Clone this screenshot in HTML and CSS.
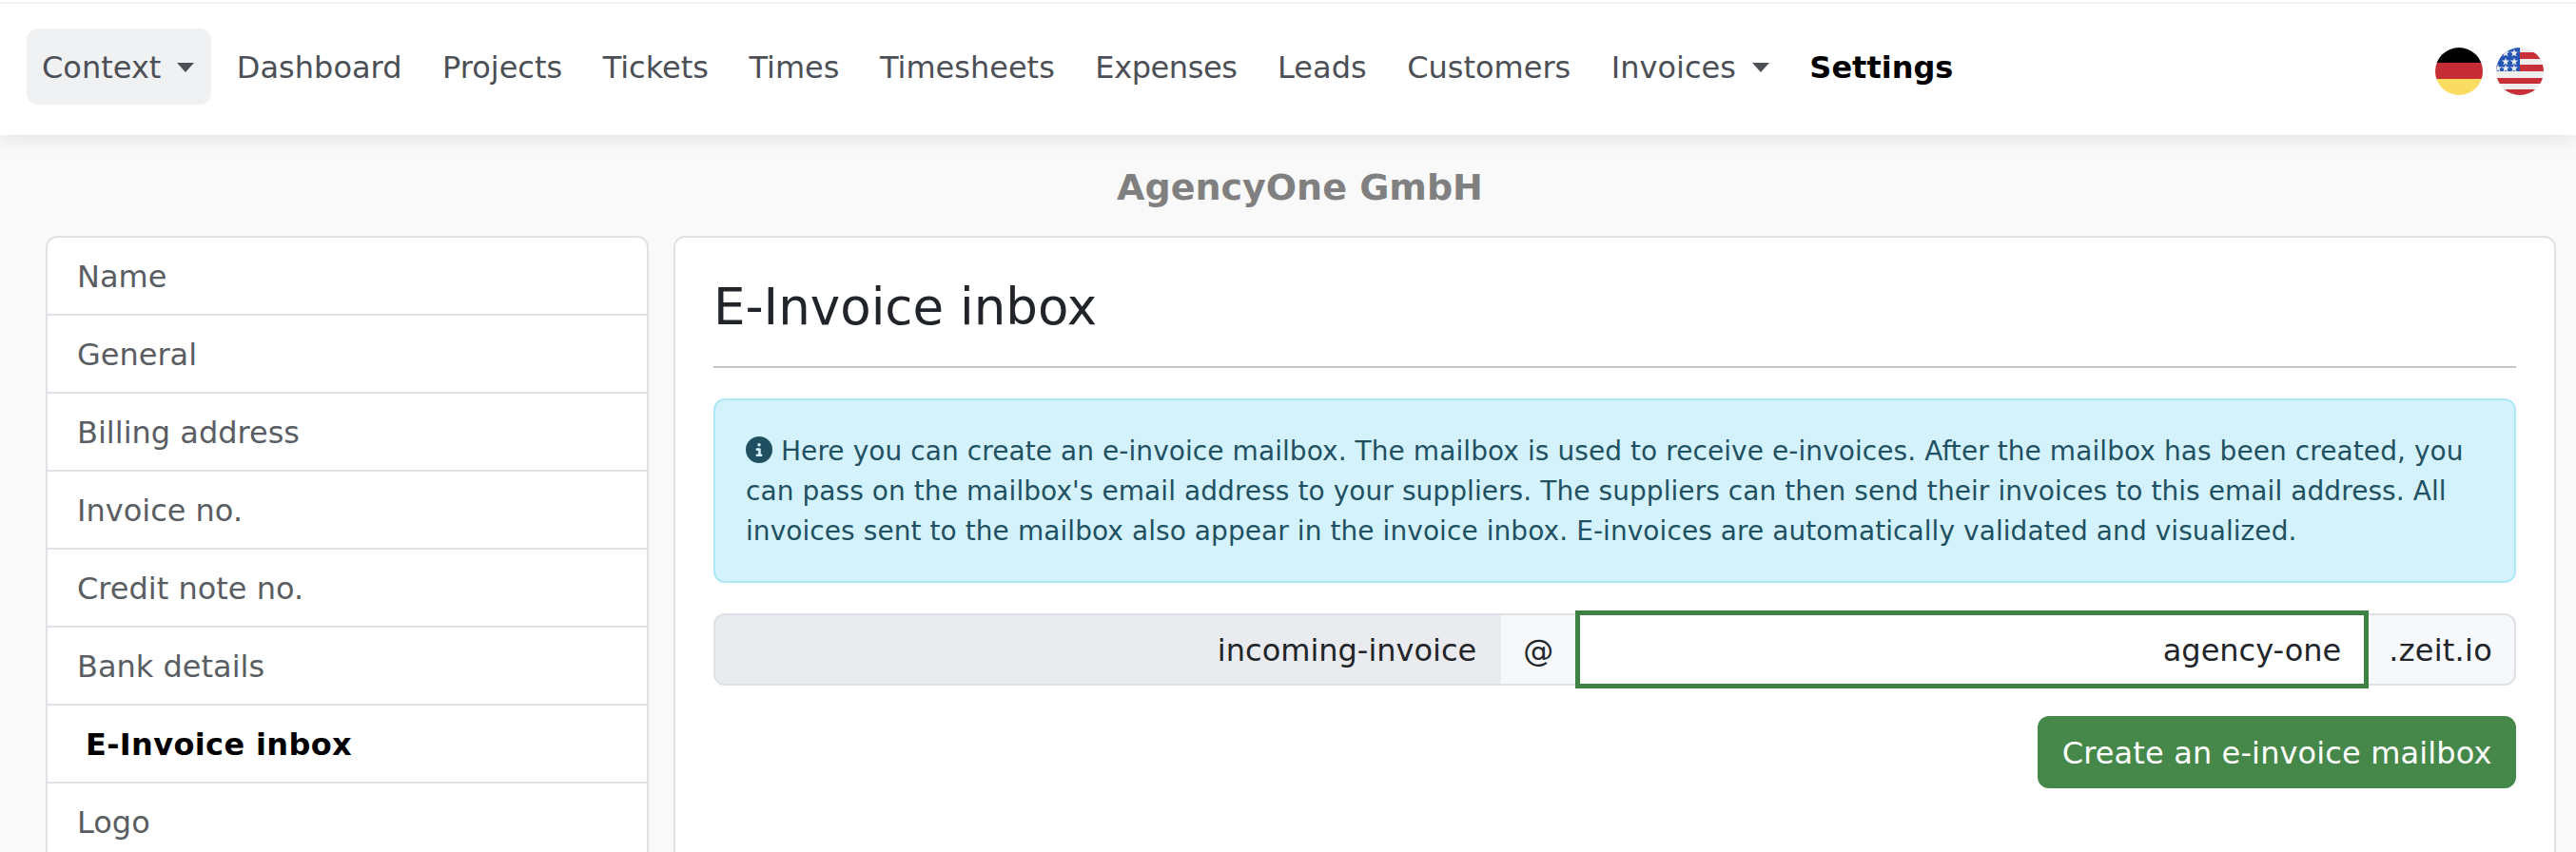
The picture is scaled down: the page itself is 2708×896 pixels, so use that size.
FILE: index.html
```html
<!DOCTYPE html>
<html lang="en">
<head>
    <meta charset="UTF-8">
    <title>E-Invoice inbox</title>
    <link rel="stylesheet" href="styles.css">
</head>
<body>
    <nav class="navbar">
        <ul class="nav-links">
            <li><a href="#" class="nav-link active caret">Context</a></li>
            <li><a href="#" class="nav-link">Dashboard</a></li>
            <li><a href="#" class="nav-link">Projects</a></li>
            <li><a href="#" class="nav-link">Tickets</a></li>
            <li><a href="#" class="nav-link">Times</a></li>
            <li><a href="#" class="nav-link">Timesheets</a></li>
            <li><a href="#" class="nav-link tight">Expenses</a></li>
            <li><a href="#" class="nav-link">Leads</a></li>
            <li><a href="#" class="nav-link">Customers</a></li>
            <li><a href="#" class="nav-link caret">Invoices</a></li>
            <li><a href="#" class="nav-link current">Settings</a></li>
        </ul>
        <div class="flags">
            <svg class="flag" viewBox="0 0 50 50">
                <clipPath id="clip-de"><circle cx="25" cy="25" r="25"/></clipPath>
                <g clip-path="url(#clip-de)">
                    <rect width="50" height="16" fill="#000"/>
                    <rect y="16" width="50" height="17" fill="#c62c33"/>
                    <rect y="33" width="50" height="17" fill="#fbdc63"/>
                </g>
            </svg>
            <svg class="flag" viewBox="0 0 50 50">
                <clipPath id="clip-us"><circle cx="25" cy="25" r="25"/></clipPath>
                <g clip-path="url(#clip-us)">
                    <rect width="50" height="50" fill="#eee"/>
                    <rect y="5" width="50" height="7" fill="#c92f38"/>
                    <rect y="18" width="50" height="7" fill="#c92f38"/>
                    <rect y="32" width="50" height="6" fill="#c92f38"/>
                    <rect y="44" width="50" height="6" fill="#c92f38"/>
                    <rect width="25" height="25" fill="#2455b5"/>
                    <g fill="#eee">
                        <polygon points="19,1.5 20,4.6 23.2,4.6 20.6,6.5 21.6,9.6 19,7.7 16.4,9.6 17.4,6.5 14.8,4.6 18,4.6"/>
                        <polygon points="19,10.5 20,13.6 23.2,13.6 20.6,15.5 21.6,18.6 19,16.7 16.4,18.6 17.4,15.5 14.8,13.6 18,13.6"/>
                        <polygon points="19,17.5 20,20.6 23.2,20.6 20.6,22.5 21.6,25.6 19,23.7 16.4,25.6 17.4,22.5 14.8,20.6 18,20.6"/>
                        <polygon points="10,1.5 11,4.6 14.2,4.6 11.6,6.5 12.6,9.6 10,7.7 7.4,9.6 8.4,6.5 5.8,4.6 9,4.6"/>
                        <polygon points="10,10.5 11,13.6 14.2,13.6 11.6,15.5 12.6,18.6 10,16.7 7.4,18.6 8.4,15.5 5.8,13.6 9,13.6"/>
                        <polygon points="10,17.5 11,20.6 14.2,20.6 11.6,22.5 12.6,25.6 10,23.7 7.4,25.6 8.4,22.5 5.8,20.6 9,20.6"/>
                        <polygon points="2,17.5 3,20.6 6.2,20.6 3.6,22.5 4.6,25.6 2,23.7 -0.6,25.6 0.4,22.5 -2.2,20.6 1,20.6"/>
                    </g>
                </g>
            </svg>
        </div>
    </nav>

    <h1 class="company">AgencyOne GmbH</h1>

    <div class="settings">
        <ul class="side-menu">
            <li><a href="#">Name</a></li>
            <li><a href="#">General</a></li>
            <li><a href="#">Billing address</a></li>
            <li><a href="#">Invoice no.</a></li>
            <li><a href="#">Credit note no.</a></li>
            <li><a href="#">Bank details</a></li>
            <li class="selected"><a href="#">E-Invoice inbox</a></li>
            <li><a href="#">Logo</a></li>
        </ul>

        <section class="card">
            <h2 class="card-title">E-Invoice inbox</h2>
            <div class="alert">
                <svg class="info-icon" viewBox="0 0 512 512"><path d="M256 512A256 256 0 1 0 256 0a256 256 0 1 0 0 512zM216 336h24V272H216c-13.3 0-24-10.7-24-24s10.7-24 24-24h48c13.3 0 24 10.7 24 24v88h8c13.3 0 24 10.7 24 24s-10.7 24-24 24H216c-13.3 0-24-10.7-24-24s10.7-24 24-24zm40-208a32 32 0 1 1 0 64 32 32 0 1 1 0-64z"/></svg>
                Here you can create an e-invoice mailbox. The mailbox is used to receive e-invoices. After the mailbox has been created, you can pass on the mailbox's email address to your suppliers. The suppliers can then send their invoices to this email address. All invoices sent to the mailbox also appear in the invoice inbox. E-invoices are automatically validated and visualized.
            </div>
            <div class="input-group">
                <span class="addon prefix">incoming-invoice</span>
                <span class="addon at">@</span>
                <input type="text" class="domain-input" value="agency-one">
                <span class="addon suffix">.zeit.io</span>
            </div>
            <div class="actions">
                <a href="#" class="btn">Create an e-invoice mailbox</a>
            </div>
        </section>
    </div>
</body>
</html>
```

FILE: styles.css
```css
body{margin:0;height:896px;overflow:hidden;background-color:#f9f9f9;color:#212529;font:32px/48px "DejaVu Sans",Verdana,sans-serif;}
a{text-decoration:none;color:inherit;}
ul{margin:0;padding:0;list-style-type:none;}

.navbar{display:flex;align-items:center;justify-content:space-between;height:142px;padding:0 34px 0 28px;background:linear-gradient(#fff 2px,#f4f4f4 2px,#f4f4f4 4px,#fff 4px);box-shadow:0 4px 20px rgba(0,0,0,.09);position:relative;}
.nav-links{display:flex;align-items:center;gap:10.5px;margin-bottom:2px;}
.nav-link{display:block;padding:17px 16px 15px;border-radius:12px;color:#4c5056;white-space:nowrap;}
.nav-link.active{padding-right:18px;background-color:#f0f1f3;}
.nav-link.current{color:#000;font-weight:bold;}
.nav-link.tight{letter-spacing:-.4px;}
.caret::after{content:"";display:inline-block;margin-left:17px;vertical-align:6px;border-top:10px solid #4c5056;border-left:9px solid transparent;border-right:9px solid transparent;}
.flags{display:flex;gap:14px;margin-top:8px;}
.flag{display:block;width:50px;height:50px;}

.company{margin:0;padding:32px 0 0 25px;height:74px;line-height:46px;font-size:38px;text-align:center;color:#808080;}

.settings{display:flex;align-items:flex-start;gap:26px;padding:0 21px 0 48px;}
.side-menu{flex:none;width:634px;box-sizing:border-box;background-color:#fff;border:2px solid #dee2e6;border-radius:12px;}
.side-menu li{border-bottom:2px solid #dee2e6;}
.side-menu li a{display:block;padding:17px 31px 15px;color:#5a5e63;}
.side-menu .selected a{padding-left:40px;color:#000;font-weight:bold;letter-spacing:.35px;}

.card{flex:1;min-height:800px;padding:37px 40px 32px;background-color:#fff;border:2px solid #dee2e6;border-radius:12px;}
.card-title{margin:0;padding-bottom:26px;font-size:53px;line-height:72px;font-weight:normal;border-bottom:2px solid #c6c6c6;}
.alert{margin-top:32px;padding:33px 32px 31px;font-size:28px;line-height:42px;letter-spacing:.07px;color:#1f5162;background-color:#d4f2fb;border:2px solid #afe8f8;border-radius:12px;}
.info-icon{width:28px;height:28px;vertical-align:-3px;fill:#1f4f60;}

.input-group{display:flex;align-items:center;margin-top:29px;}
.addon{box-sizing:border-box;height:76px;padding:13px 24px 11px;border:2px solid #dee2e6;background-color:#f7f8fa;white-space:nowrap;}
.prefix{flex:1;padding-right:26px;text-align:right;background-color:#eaebef;border-radius:12px 0 0 12px;border-right:0;}
.at{padding:13px 23px 11px;border-left:0;border-right:0;}
.domain-input{box-sizing:border-box;width:834px;height:82px;margin:0;padding:2px 24px 0;border:5px solid #3e8243;outline:0 none;text-align:right;color:#212529;font:inherit;}
.suffix{padding:13px 23px 11px 21px;letter-spacing:.25px;border-left:0;border-radius:0 12px 12px 0;}

.actions{display:flex;justify-content:flex-end;margin-top:29px;}
.btn{display:block;padding:15px 25.5px 13px;letter-spacing:.13px;color:#fff;background-color:#46874a;border-radius:12px;}
```
